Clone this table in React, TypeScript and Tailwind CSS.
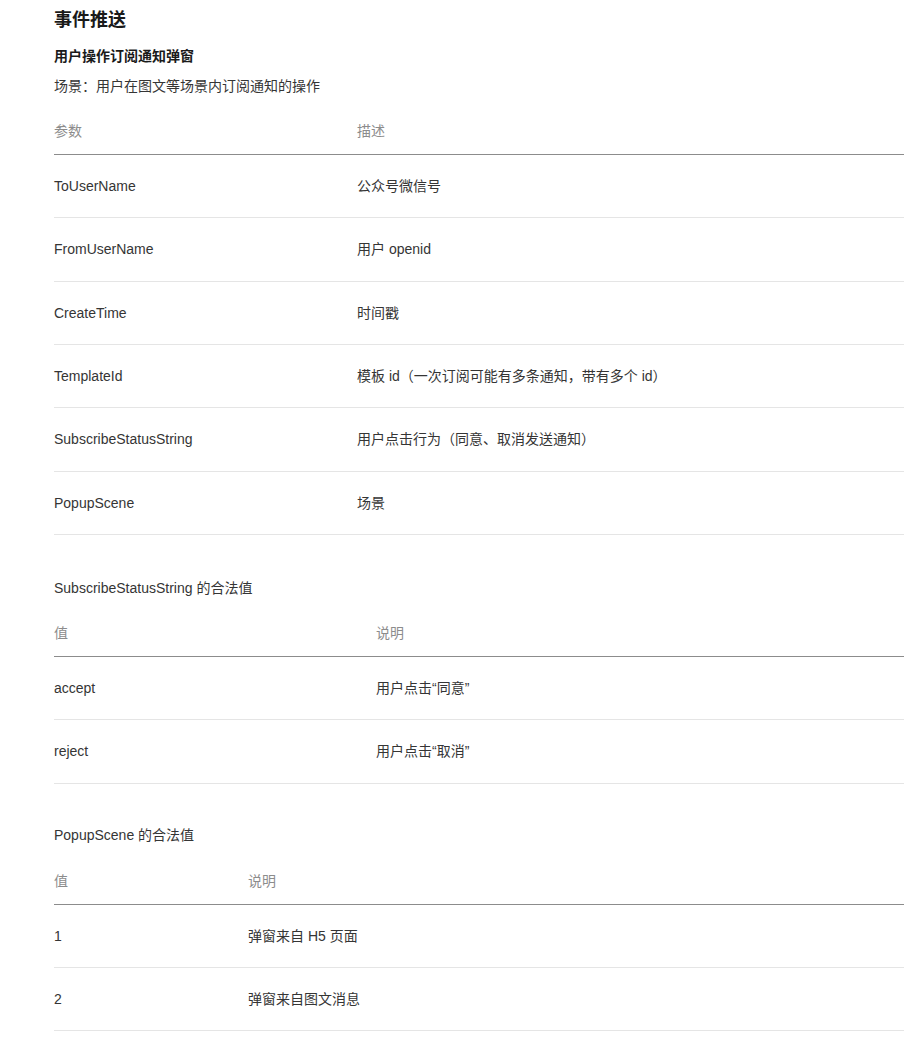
const font = { fontFamily: '"Liberation Sans", "Noto Sans CJK SC", sans-serif' }

interface Table {
  firstCol: string
  head: [string, string]
  rows: [string, string][]
}

const eventTable: Table = {
  firstCol: 'w-[303px]',
  head: ['参数', '描述'],
  rows: [
    ['ToUserName', '公众号微信号'],
    ['FromUserName', '用户 openid'],
    ['CreateTime', '时间戳'],
    ['TemplateId', '模板 id（一次订阅可能有多条通知，带有多个 id）'],
    ['SubscribeStatusString', '用户点击行为（同意、取消发送通知）'],
    ['PopupScene', '场景'],
  ],
}

const statusTable: Table = {
  firstCol: 'w-[322px]',
  head: ['值', '说明'],
  rows: [
    ['accept', '用户点击“同意”'],
    ['reject', '用户点击“取消”'],
  ],
}

const sceneTable: Table = {
  firstCol: 'w-[194px]',
  head: ['值', '说明'],
  rows: [
    ['1', '弹窗来自 H5 页面'],
    ['2', '弹窗来自图文消息'],
  ],
}

function DocTable({ t, className }: { t: Table; className: string }) {
  return (
    <table className={`w-full border-collapse text-left text-[14px] ${className}`}>
      <thead>
        <tr className="border-b border-[#8c8c8c]">
          <th className={`${t.firstCol} pt-[13px] pb-[13px] leading-[20px] font-normal text-[#8c8c8c]`}>{t.head[0]}</th>
          <th className="pt-[13px] pb-[13px] leading-[20px] font-normal text-[#8c8c8c]">{t.head[1]}</th>
        </tr>
      </thead>
      <tbody>
        {t.rows.map(([a, b]) => (
          <tr key={a} className="border-b border-[#e5e5e5]">
            <td className="py-[21px] leading-[20.33px] text-[#353535]">{a}</td>
            <td className="py-[21px] leading-[20.33px] text-[#353535]">{b}</td>
          </tr>
        ))}
      </tbody>
    </table>
  )
}

export default function App() {
  return (
    <div className="min-h-[1039px] bg-white pl-[54px] pr-[5px] pt-[8px]" style={font}>
      <h2 className="text-[18px] leading-[24px] font-bold text-[#1a1a1a]">事件推送</h2>
      <h3 className="mt-[14px] text-[14px] leading-[20px] font-bold text-[#1a1a1a]">用户操作订阅通知弹窗</h3>
      <p className="mt-[10px] text-[14px] leading-[20px] text-[#353535]">场景：用户在图文等场景内订阅通知的操作</p>

      <DocTable t={eventTable} className="mt-[12px]" />

      <p className="mt-[43px] text-[14px] leading-[20px] text-[#353535]">SubscribeStatusString 的合法值</p>
      <DocTable t={statusTable} className="mt-[12px]" />

      <p className="mt-[41px] text-[14px] leading-[20px] text-[#353535]">PopupScene 的合法值</p>
      <DocTable t={sceneTable} className="mt-[13px]" />
    </div>
  )
}
